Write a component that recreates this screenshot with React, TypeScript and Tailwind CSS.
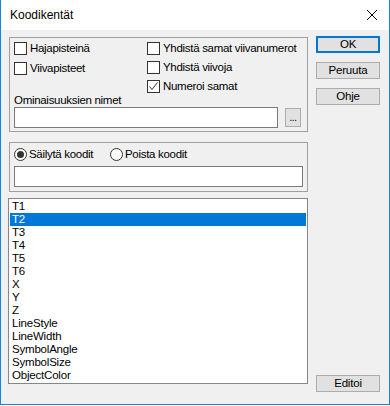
import React from "react";

const font = { fontFamily: '"Liberation Sans", Arial, sans-serif' };

const txt = "text-[11.5px] tracking-[-0.3px]";

function CheckBox({ label, checked = false }: { label: string; checked?: boolean }) {
  return (
    <div className="flex items-center h-[13px]">
      <div className="w-[13px] h-[13px] border border-[#333333] bg-white flex items-center justify-center shrink-0">
        {checked && (
          <svg width="11" height="11" viewBox="0 0 11 11">
            <polyline points="1.5,5.5 4,8.5 9.5,1.5" fill="none" stroke="#333333" strokeWidth="1" />
          </svg>
        )}
      </div>
      <span className="ml-[3px] text-[11.5px] tracking-[-0.3px] leading-[13px] text-black whitespace-nowrap">{label}</span>
    </div>
  );
}

function Radio({ label, checked = false }: { label: string; checked?: boolean }) {
  return (
    <div className="flex items-center h-[13px]">
      <div className="w-[13px] h-[13px] rounded-full border border-[#333333] bg-white flex items-center justify-center shrink-0">
        {checked && <div className="w-[7px] h-[7px] rounded-full bg-[#333333]" />}
      </div>
      <span className="ml-[2px] text-[11.5px] tracking-[-0.3px] leading-[13px] text-black whitespace-nowrap">{label}</span>
    </div>
  );
}

function Btn({ label, def = false }: { label: string; def?: boolean }) {
  return (
    <div
      className={
        def
          ? "h-[17px] w-[64px] border-2 border-[#0078d7] bg-[#e1e1e1] flex items-center justify-center text-[11.5px] tracking-[-0.2px] leading-none text-black"
          : "h-[17px] w-[64px] border border-[#adadad] bg-[#e1e1e1] flex items-center justify-center text-[11.5px] tracking-[-0.2px] leading-none text-black"
      }
    >
      {label}
    </div>
  );
}

const items = ["T1", "T2", "T3", "T4", "T5", "T6", "X", "Y", "Z", "LineStyle", "LineWidth", "SymbolAngle", "SymbolSize", "ObjectColor"];

export default function App() {
  void txt;
  return (
    <div className="w-[390px] h-[406px] bg-white" style={font}>
      <div className="h-[405px] border-l border-r border-b border-[#1883d7] flex flex-col">
        <div className="h-[30px] bg-white flex items-center pl-[9px] pr-[11px] shrink-0">
          <span className="text-[12px] text-black">Koodikentät</span>
          <svg className="ml-auto" width="12" height="12" viewBox="0 0 12 12">
            <path d="M1 1 L11 11 M11 1 L1 11" stroke="#000" strokeWidth="1" />
          </svg>
        </div>
        <div className="flex-1 bg-[#f0f0f0] flex">
          <div className="pl-[8px] w-[307px] shrink-0 flex flex-col pt-[7px] pb-[20px]">
            <div className="h-[95px] border border-[#a0a0a0] pt-[4px] pl-[4px] flex flex-col">
              <div className="flex">
                <div className="w-[133px] shrink-0 flex flex-col gap-[7px]">
                  <CheckBox label="Hajapisteinä" />
                  <CheckBox label="Viivapisteet" />
                </div>
                <div className="flex flex-col gap-[6px]">
                  <CheckBox label="Yhdistä samat viivanumerot" />
                  <CheckBox label="Yhdistä viivoja" />
                  <CheckBox label="Numeroi samat" checked />
                </div>
              </div>
              <div className="mt-[1px] text-[11.5px] tracking-[-0.3px] leading-[13px] text-black">Ominaisuuksien nimet</div>
              <div className="flex items-center gap-[7px]">
                <div className="w-[264px] h-[21px] border border-[#7a7a7a] bg-white" />
                <div className="w-[16px] h-[19px] border border-[#adadad] bg-[#e1e1e1] flex items-end justify-center pb-[3px]">
                  <span className="text-[10px] leading-none text-black tracking-[-0.5px]">...</span>
                </div>
              </div>
            </div>
            <div className="mt-[10px] h-[50px] border border-[#a0a0a0] pt-[5px] pl-[4px] flex flex-col gap-[5px]">
              <div className="flex items-center">
                <div className="w-[96px] shrink-0">
                  <Radio label="Säilytä koodit" checked />
                </div>
                <Radio label="Poista koodit" />
              </div>
              <div className="w-[289px] h-[21px] border border-[#7a7a7a] bg-white" />
            </div>
            <div className="mt-[6px] -ml-[1px] w-[300px] flex-1 border border-[#828790] bg-white p-[1px]">
              {items.map((it) => (
                <div
                  key={it}
                  className={
                    it === "T2"
                      ? "h-[13px] leading-[13px] text-[11.5px] tracking-[-0.2px] pl-[2px] bg-[#0078d7] text-white"
                      : "h-[13px] leading-[13px] text-[11.5px] tracking-[-0.2px] pl-[2px] text-black"
                  }
                >
                  {it}
                </div>
              ))}
            </div>
          </div>
          <div className="ml-[8px] flex flex-col pt-[6px] pb-[12px]">
            <Btn label="OK" def />
            <div className="mt-[9px]">
              <Btn label="Peruuta" />
            </div>
            <div className="mt-[9px]">
              <Btn label="Ohje" />
            </div>
            <div className="mt-auto">
              <Btn label="Editoi" />
            </div>
          </div>
        </div>
      </div>
    </div>
  );
}
